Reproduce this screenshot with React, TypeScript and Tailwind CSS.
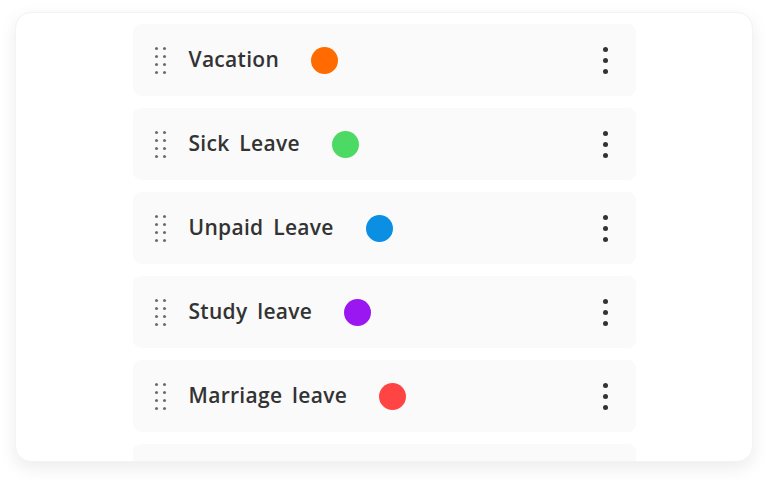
const leaves = [
  { name: "Vacation", color: "bg-[#ff6b00]" },
  { name: "Sick Leave", color: "bg-[#4cd964]" },
  { name: "Unpaid Leave", color: "bg-[#0a8fe3]" },
  { name: "Study leave", color: "bg-[#9b17f2]" },
  { name: "Marriage leave", color: "bg-[#ff4444]" },
  { name: "", color: "" },
];

const DragHandle = () => (
  <div className="grid grid-cols-2 gap-x-[5px] gap-y-[5px]">
    {Array.from({ length: 8 }).map((_, i) => (
      <span key={i} className="w-[3px] h-[3px] rounded-full bg-[#6b6b6b]" />
    ))}
  </div>
);

const Kebab = () => (
  <div className="flex flex-col gap-[6px]">
    <span className="w-[5px] h-[5px] rounded-full bg-[#333]" />
    <span className="w-[5px] h-[5px] rounded-full bg-[#333]" />
    <span className="w-[5px] h-[5px] rounded-full bg-[#333]" />
  </div>
);

export default function App() {
  return (
    <div className="w-[768px] h-[480px] bg-white pt-3 px-[15px] font-['Open_Sans',sans-serif]">
      <div className="h-[450px] rounded-2xl bg-white shadow-[0_6px_18px_rgba(0,0,0,0.08)] border border-[#f3f3f3] overflow-hidden pt-[11px]">
        <div className="w-[503px] mx-auto flex flex-col gap-3">
          {leaves.map((l, i) => (
            <div
              key={i}
              className="h-[72px] rounded-lg bg-[#fafafa] flex items-center pl-[22px] pr-[28px]"
            >
              {l.name && (
                <>
                  <DragHandle />
                  <span className="ml-[23px] text-[21px] font-semibold text-[#333] tracking-[0.3px] [word-spacing:4px]">
                    {l.name}
                  </span>
                  <span className={`ml-[32px] w-[27px] h-[27px] rounded-full ${l.color}`} />
                  <div className="ml-auto">
                    <Kebab />
                  </div>
                </>
              )}
            </div>
          ))}
        </div>
      </div>
    </div>
  );
}
